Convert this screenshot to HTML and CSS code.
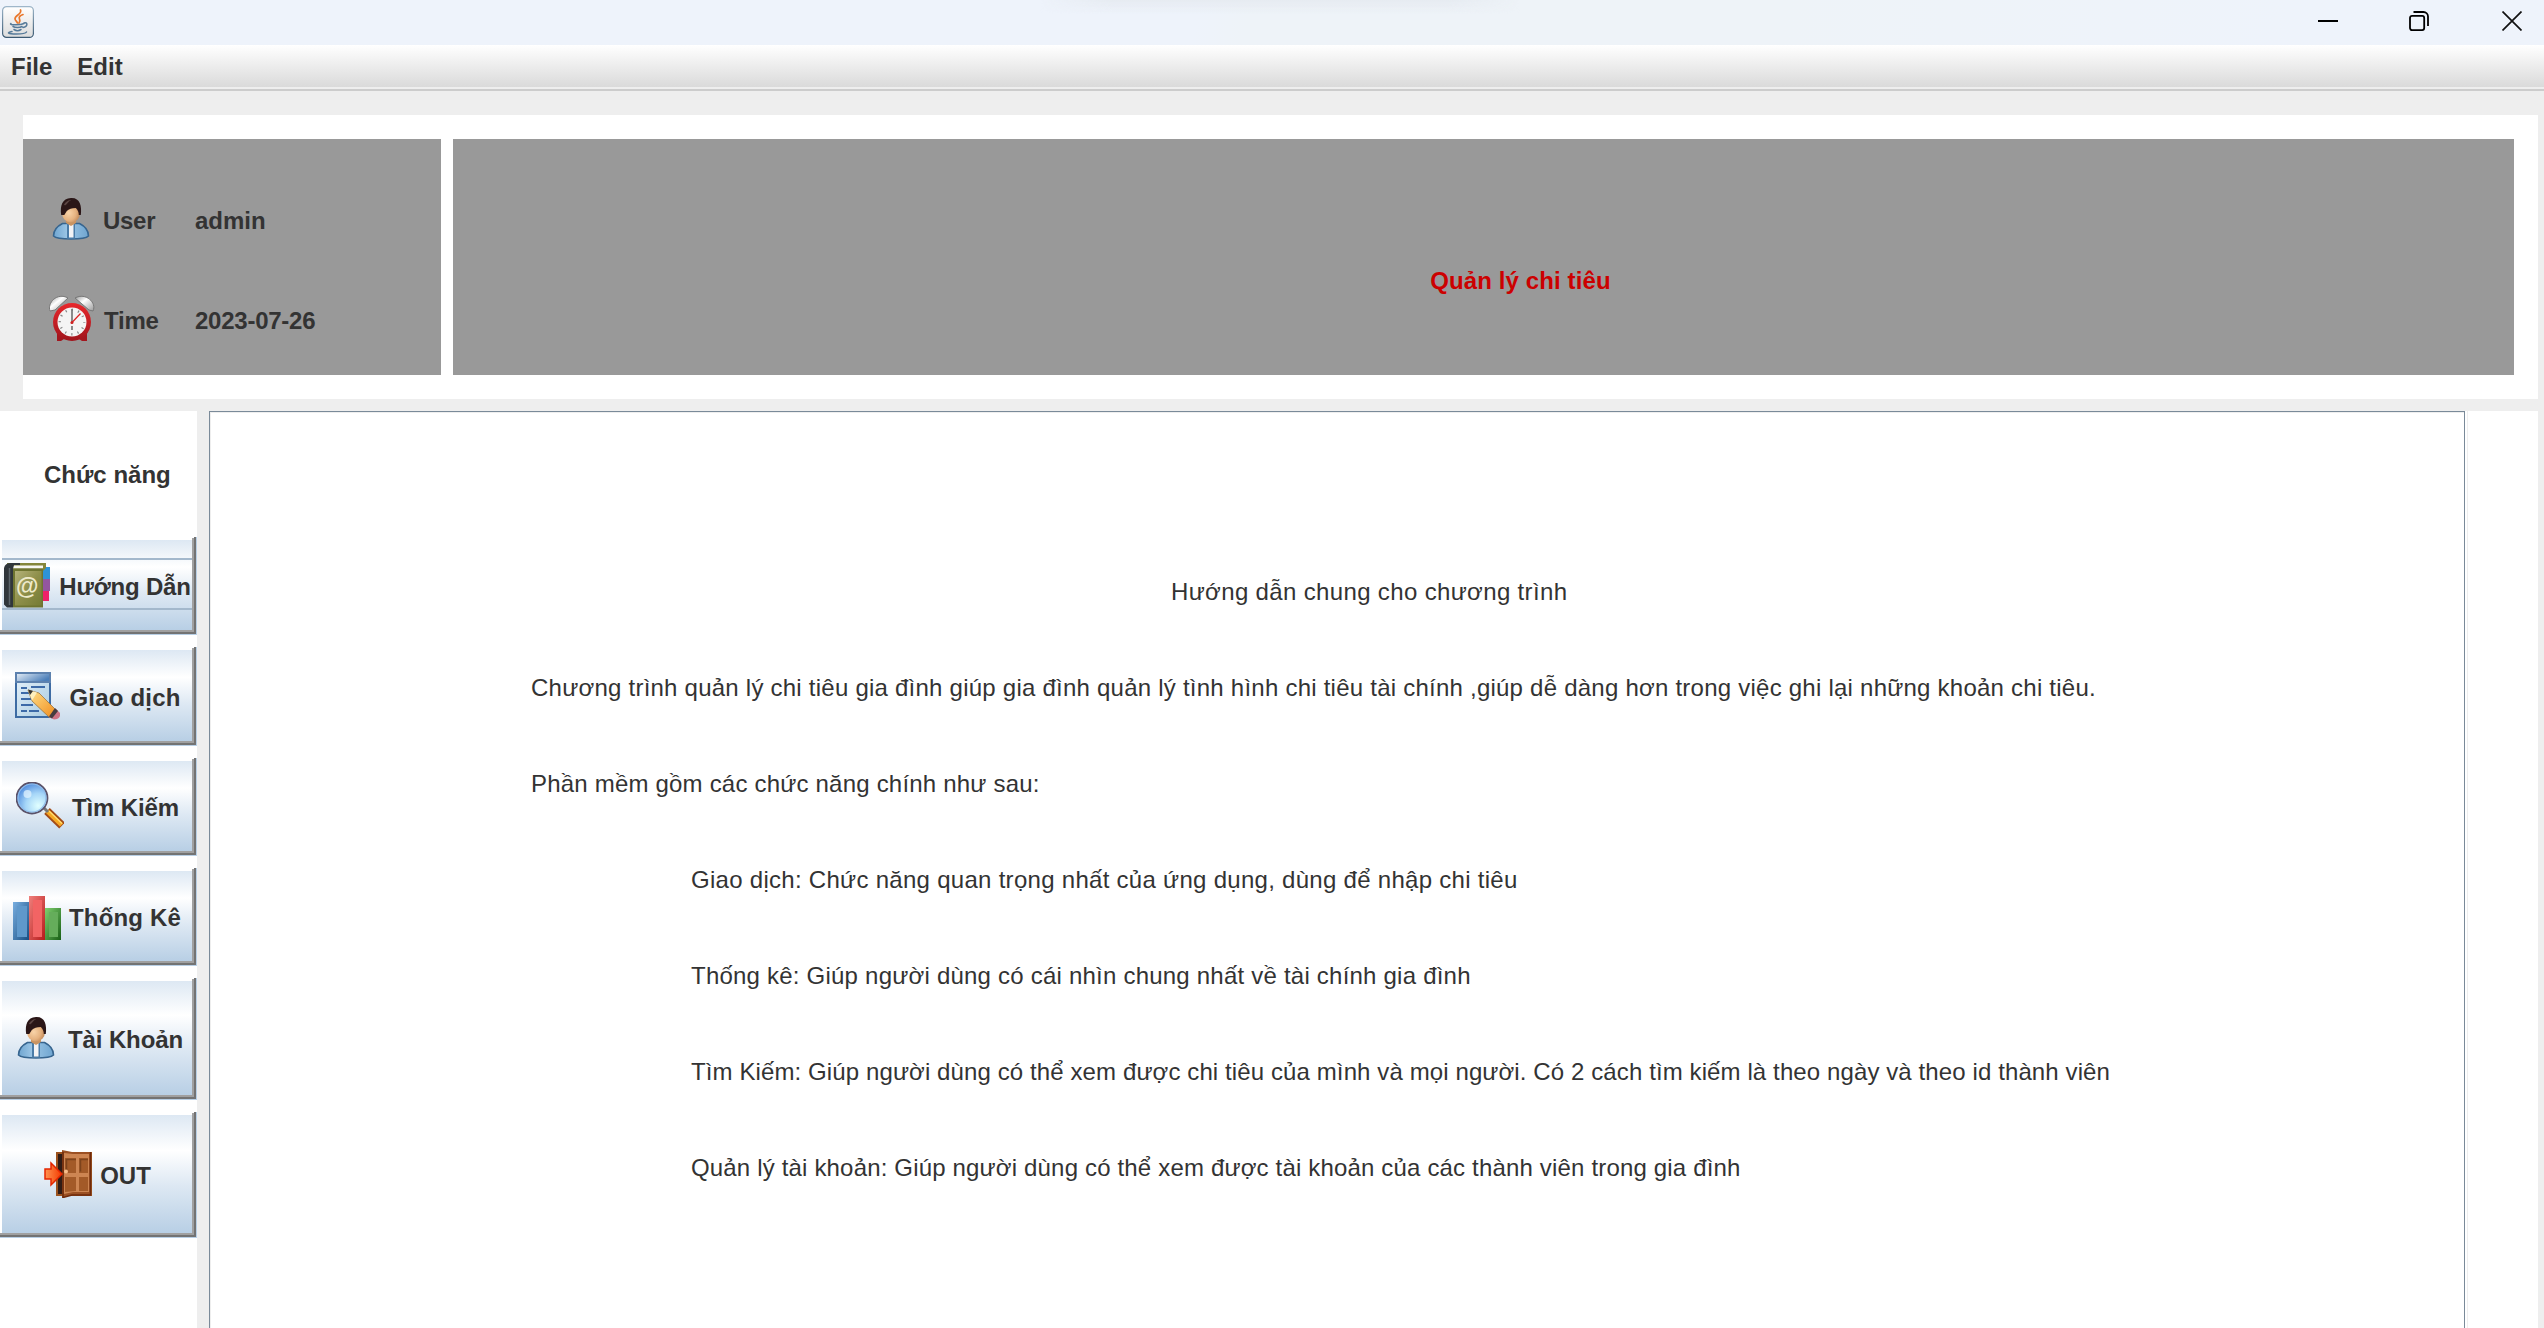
FILE: index.html
```html
<!DOCTYPE html>
<html lang="vi">
<head>
<meta charset="utf-8">
<title>Quản lý chi tiêu</title>
<link rel="stylesheet" href="styles.css">
</head>
<body>
<svg width="0" height="0" class="defs" aria-hidden="true">
  <defs>
    <linearGradient id="shirt" x1="0" x2="1"><stop offset="0" stop-color="#6fa5d0"/><stop offset=".4" stop-color="#9cc6e6"/><stop offset="1" stop-color="#6fa5d0"/></linearGradient>
    <radialGradient id="skin" cx=".38" cy=".5" r=".65"><stop offset="0" stop-color="#f8d3a8"/><stop offset=".6" stop-color="#e5b280"/><stop offset="1" stop-color="#bd8555"/></radialGradient>
    <symbol id="person" viewBox="0 0 48 48">
      <path d="M6.500 41c0-5 3-9.500 9-12.500h17c6 3 9 7.500 9 12.500-2 2-9 3-17.500 3S8.500 43 6.500 41z" fill="url(#shirt)" stroke="#37658f" stroke-width="1.600"/>
      <path d="M20 28h8v15.500h-8z" fill="#4a7ca8"/>
      <path d="M22 28h4.500v14.500H22z" fill="#f3f3f5"/>
      <path d="M19 24h10v4l-5 3-5-3z" fill="#c99462"/>
      <ellipse cx="24" cy="18" rx="9" ry="9.500" fill="url(#skin)"/>
      <path d="M14.200 20C13 11 15 3.500 24 3S35 11 33.800 20l-2 0c0-3-1-5-3-7-4 0-7 1-9 3l-2.500 4z" fill="#2a1617"/>
      <path d="M17 9.500c2-3 5-5 7-4-2 0-3 3-6 5z" fill="#5b4543"/>
    </symbol>
  </defs>
</svg>

<div class="window">
  <header class="titlebar">
    <svg class="java" viewBox="0 0 32 32">
      <defs><linearGradient id="jb" x2="0" y2="1"><stop offset="0" stop-color="#fff"/><stop offset="1" stop-color="#dcdcdc"/></linearGradient>
      <linearGradient id="js" x2="0" y2="1"><stop offset="0" stop-color="#9eb6c9"/><stop offset="1" stop-color="#3c5a73"/></linearGradient></defs>
      <rect x=".6" y=".6" width="30.800" height="30.800" rx="4" fill="url(#jb)" stroke="url(#js)" stroke-width="1.200"/>
      <g fill="none" stroke="#e9772b" stroke-width="1.700" stroke-linecap="round"><path d="M18.500 4c2 4-6 5.500-5.500 9 .2 1.500 2 2.500 2.500 4"/><path d="M21 8.500c-3 1-4.500 2.500-3.500 4.500.8 1.500.5 2.500-.5 4"/></g>
      <g fill="none" stroke="#557a99" stroke-width="1.500" stroke-linecap="round"><path d="M9 17.500c-3 1.500 9 2 13 0M22 17c4-1.500 4 4-1 4.500M11 20.500c2 1.300 7 1.300 9 0M12 23.500c2 1.300 5 1.300 7 0M10 25.500c-6 1-4 2.500 4 2.500 7 0 10-1 10.500-2"/></g>
    </svg>
    <div class="glow"></div>
    <div class="controls">
      <svg viewBox="0 0 20 20"><path d="M0 10h20" stroke="#000" stroke-width="2"/></svg>
      <svg viewBox="0 0 20 20" fill="none" stroke="#000" stroke-width="1.800"><rect x="1" y="4.900" width="14.200" height="14.200" rx="2"/><path d="M4.500 1H14.500a4.500 4.500 0 0 1 4.500 4.500V15"/></svg>
      <svg viewBox="0 0 20 20"><path d="M.5.500l19 19M19.500.500l-19 19" stroke="#111" stroke-width="1.700"/></svg>
    </div>
  </header>
  <nav class="menubar"><span>File</span><span>Edit</span></nav>

  <section class="banner">
    <div class="session">
      <div class="row"><svg class="icon"><use href="#person"/></svg><b>User</b><span>admin</span></div>
      <div class="row time">
        <svg class="icon" viewBox="0 0 48 48">
          <defs><linearGradient id="bell" x2="1" y2="1"><stop offset="0" stop-color="#999"/><stop offset=".4" stop-color="#fff"/><stop offset="1" stop-color="#999"/></linearGradient>
          <linearGradient id="red" x2="0" y2="1"><stop offset="0" stop-color="#e8282c"/><stop offset="1" stop-color="#a0141c"/></linearGradient></defs>
          <path d="M2 17C-1 9 9-2 20 4L7 16z" fill="url(#bell)" stroke="#777"/>
          <path d="M45 17C49 9 38-2 27 4l14 12z" fill="url(#bell)" stroke="#777"/>
          <path d="M9 39h30v8h-5l-3-2H16l-3 2H9z" fill="#a3161e"/>
          <circle cx="24" cy="28" r="19" fill="url(#red)"/>
          <circle cx="24" cy="28" r="14.500" fill="#f4f4f4"/>
          <circle cx="24" cy="28" r="12.200" fill="none" stroke="#888" stroke-width="2.400" stroke-dasharray="1.200 5.188" stroke-dashoffset=".6"/>
          <path d="M24 15v13M24 32v4" stroke="#777" stroke-width="1.700"/>
          <path d="M23 29.500l9.500-10" stroke="#d22" stroke-width="1.200"/>
          <circle cx="24" cy="28.500" r="1.500" fill="#c22"/>
        </svg><b>Time</b><span>2023-07-26</span></div>
    </div>
    <div class="heading"><h1>Quản lý chi tiêu</h1></div>
  </section>

  <div class="body">
    <aside class="sidebar">
      <h2>Chức năng</h2>
      <button class="guide-button">
        <svg class="icon" viewBox="0 0 48 48">
          <defs><linearGradient id="cov" x2="1" y2="1"><stop offset="0" stop-color="#b4b27a"/><stop offset=".5" stop-color="#8e8f4a"/><stop offset="1" stop-color="#757b35"/></linearGradient></defs>
          <rect x="38" y="6" width="9" height="12" fill="#2d93d8"/><rect x="38" y="18" width="9" height="12" fill="#93569f"/><rect x="38" y="30" width="8" height="10" fill="#ef2268"/>
          <path d="M4 2h39v5l-3 3H4z" fill="#84863a"/><path d="M8 4.500h32v3H8z" fill="#f7f7f2"/>
          <path d="M1 7q1-5 7-5h9v2H11L10 8v38.500H4l-3-3z" fill="#30363b"/><path d="M6.500 7v37" stroke="#5c656b" stroke-width="1.500"/>
          <rect x="10" y="7.500" width="30" height="39" fill="#6e7430"/><rect x="12" y="10" width="26.500" height="34.500" fill="url(#cov)"/>
          <text x="24" y="33" text-anchor="middle" font-size="23" fill="#eeeacb">@</text>
        </svg><span>Hướng Dẫn</span></button>
      <button class="deal">
        <svg class="icon" viewBox="0 0 48 48">
          <defs><linearGradient id="win" x2="1" y2="1"><stop offset="0" stop-color="#e6f2fb"/><stop offset="1" stop-color="#a9cbe0"/></linearGradient>
          <linearGradient id="bar" x2="1" y2=".5"><stop offset="0" stop-color="#e8f0f8"/><stop offset="1" stop-color="#4c7fb9"/></linearGradient>
          <linearGradient id="pen" x2="1" y2="1"><stop offset="0" stop-color="#ffe48f"/><stop offset="1" stop-color="#f08a1a"/></linearGradient></defs>
          <rect x="3" y="1" width="34" height="44" fill="url(#win)" stroke="#3d6ba3" stroke-width="2"/>
          <rect x="3" y="1" width="34" height="9" fill="url(#bar)" stroke="#5c81ae" stroke-width="2"/>
          <path d="M8 16h6M18 15h14M8 21h8M8 27h10M8 33h12M8 39h6M16 39h10" stroke="#3c6aa8" stroke-width="2"/>
          <path d="M15 18l11 3 17 17-6 8-18-17z" fill="url(#pen)" stroke="#9a7540" stroke-width=".8"/>
          <path d="M15 18l9 2.500-5 8z" fill="#fff0bd"/><path d="M15 17.500l5 1.500-3 4z" fill="#333"/>
          <path d="M43 37l4 4q1 6-6 6.500L36 45z" fill="#cf7486"/><path d="M42 36l3 3-6 7.500-3-2z" fill="#463d40"/>
        </svg><span>Giao dịch</span></button>
      <button class="search">
        <svg class="icon" viewBox="0 0 48 48">
          <defs><radialGradient id="lens" cx=".7" cy=".75" r=".8"><stop offset="0" stop-color="#e0ffff"/><stop offset=".5" stop-color="#a6d6f8"/><stop offset="1" stop-color="#4b87dc"/></radialGradient></defs>
          <path d="M31 29l15 14.500" stroke="#a24b17" stroke-width="8"/><path d="M31 29l14.500 14" stroke="#f6a823" stroke-width="4.500"/><path d="M33 29l13 12.500" stroke="#ffdc74" stroke-width="1.300"/>
          <path d="M28 26l4 4" stroke="#777" stroke-width="3"/>
          <circle cx="16" cy="16" r="15.500" fill="url(#lens)" stroke="#5b5269" stroke-width="1.800"/><circle cx="16" cy="16" r="14" fill="none" stroke="#91bde9" stroke-width="1.200"/>
          <circle cx="11.500" cy="12" r="4" fill="#e2f3ff" opacity=".75"/>
        </svg><span>Tìm Kiếm</span></button>
      <button class="stats">
        <svg class="icon" viewBox="0 0 48 48">
          <defs><linearGradient id="b1" x2="1" y2="1"><stop offset="0" stop-color="#78aee0"/><stop offset="1" stop-color="#174d82"/></linearGradient>
          <linearGradient id="b2" x2="1" y2="1"><stop offset="0" stop-color="#f0807c"/><stop offset="1" stop-color="#b61a1b"/></linearGradient>
          <linearGradient id="b3" x2="1" y2="1"><stop offset="0" stop-color="#80d070"/><stop offset="1" stop-color="#186015"/></linearGradient></defs>
          <path d="M0 10h16v38H0z" fill="url(#b1)"/><path d="M4 14h10v31H4z" fill="#5f98cb"/>
          <path d="M16 4h16v44H16z" fill="url(#b2)"/><path d="M20 8h9v37h-9z" fill="#f26464"/>
          <path d="M32 16h16v32H32z" fill="url(#b3)"/><path d="M36 20h9v25h-9z" fill="#65ad5b"/>
        </svg><span>Thống Kê</span></button>
      <button class="account"><svg class="icon"><use href="#person"/></svg><span>Tài Khoản</span></button>
      <button class="out">
        <svg class="icon" viewBox="0 0 48 48">
          <defs><linearGradient id="arr" x2="1"><stop offset="0" stop-color="#ff9350"/><stop offset="1" stop-color="#f23a00"/></linearGradient></defs>
          <rect x="13" y="3" width="34" height="42" fill="#301c16" stroke="#9c531e" stroke-width="2"/>
          <path d="M18 0l10 2h19v43H28l-10 3z" fill="#9b5023"/><path d="M20 3l9 1h16v38H29l-9 2z" fill="#cd8552"/>
          <path d="M21 8h11v15H21zM35 8h9v15h-9zM21 27h11v14l-11 1zM35 27h9v14h-9z" fill="#a35a28"/>
          <path d="M22.500 21.500V9.500H32M36.500 21.500V9.500H44" fill="none" stroke="#7d431c" stroke-width="1.500"/>
          <path d="M46.500 2v43H28l-9 2.500V2" fill="none" stroke="#6e2a0c" stroke-width="1.500"/>
          <path d="M1 19h6v-6l11 11L7 35v-6H1z" fill="url(#arr)" stroke="#e52600" stroke-width="1.500"/>
          <circle cx="22" cy="21.500" r="2" fill="#f6bd8a"/>
        </svg><span>OUT</span></button>
    </aside>
    <main class="guide">
      <p class="lead">Hướng dẫn chung cho chương trình</p>
      <p class="intro">Chương trình quản lý chi tiêu gia đình giúp gia đình quản lý tình hình chi tiêu tài chính ,giúp dễ dàng hơn trong việc ghi lại những khoản chi tiêu.</p>
      <p class="features">Phần mềm gồm các chức năng chính như sau:</p>
      <p class="item wide">Giao dịch: Chức năng quan trọng nhất của ứng dụng, dùng để nhập chi tiêu</p>
      <p class="item">Thống kê: Giúp người dùng có cái nhìn chung nhất về tài chính gia đình</p>
      <p class="item narrow">Tìm Kiếm: Giúp người dùng có thể xem được chi tiêu của mình và mọi người. Có 2 cách tìm kiếm là theo ngày và theo id thành viên</p>
      <p class="item medium">Quản lý tài khoản: Giúp người dùng có thể xem được tài khoản của các thành viên trong gia đình</p>
    </main>
    <div class="gutter"></div>
  </div>
</div>
</body>
</html>
```

FILE: styles.css
```css
* { box-sizing: border-box; margin: 0; }
body { background: #eee; color: #333; font: 24px/28px "Liberation Sans", Arial, sans-serif; }
.defs { position: absolute; }
.window { display: flex; flex-direction: column; height: 1328px; overflow: hidden; }

.titlebar { display: flex; height: 45px; background: linear-gradient(100deg, #eef3fb 0 47%, #eef3f8 49% 70%, #eef3fb 90%); }
.java { width: 32px; height: 32px; margin: 6px 0 0 2px; }
.glow { width: 480px; height: 14px; margin-left: 1006px; background: linear-gradient(#e6ebf1, #e6ebf100); mask-image: linear-gradient(90deg, transparent, #000 15% 85%, transparent); }
.controls { display: flex; margin: 11px 22px 0 auto; }
.controls svg { width: 20px; height: 20px; display: block; margin-left: 71px; }
.controls svg:last-child { margin-left: 73px; }
.menubar { display: flex; gap: 25px; height: 46px; padding: 8px 11px 0; font-weight: bold; border-bottom: 2px solid #ccc; background: linear-gradient(#fff, #dadada) 0 0 / 100% 42px no-repeat, #eee; }

.banner { display: flex; gap: 12px; margin: 24px 6px 12px 23px; padding: 24px 24px 24px 0; height: 284px; background: #fff; }
.session { width: 418px; background: #999; padding: 56px 0 0 24px; font-weight: bold; }
.row { display: grid; grid-template-columns: 48px 84px auto; column-gap: 8px; align-items: center; height: 48px; }
.row + .row { margin-top: 51px; }
.row b, .row span { padding-top: 3px; }
.row b { letter-spacing: -.3px; }
.row.time { grid-template-columns: 48px 83px auto; padding-left: 1px; }
.row.time b, .row.time span { padding-top: 5px; letter-spacing: -.25px; }
.icon { width: 48px; height: 48px; flex: none; display: block; }
.heading { flex: 1; background: #999; text-align: center; padding: 128px 0 0 74px; }
h1, h2 { font-size: 24px; line-height: 28px; }
h1 { color: #c00; letter-spacing: .1px; }

.body { display: flex; flex: 1; min-height: 0; padding-right: 6px; }
.sidebar { display: flex; flex-direction: column; gap: 12px; width: 197px; background: #fff; }
.sidebar h2 { height: 114px; padding: 50px 0 0 44px; }
button { display: flex; align-items: center; justify-content: center; gap: 8px; height: 98px; flex: none; padding: 3px 5px 5px 2px; white-space: nowrap; border: 0; color: #333; font: bold 24px/28px "Liberation Sans", Arial, sans-serif;
  background:
    linear-gradient(#b8cfe5, #b8cfe5) 100% 0 / 1px 100% no-repeat,
    linear-gradient(#b8cfe5, #b8cfe5) 0 100% / 100% 1px no-repeat,
    linear-gradient(#737373, #737373) 194px 0 / 2px calc(100% - 1px) no-repeat,
    linear-gradient(#737373, #737373) 0 calc(100% - 1px) / 196px 2px no-repeat,
    linear-gradient(#a0a0a0, #a0a0a0) 192px 1px / 2px calc(100% - 4px) no-repeat,
    linear-gradient(#a0a0a0, #a0a0a0) 0 calc(100% - 3px) / 194px 2px no-repeat,
    linear-gradient(#dde8f3, #fff 30%, #dde8f3 60%, #b8cfe5) content-box no-repeat,
    #fff; }
button span { padding-top: 3px; }
.deal { height: 99px; letter-spacing: .2px; }
.deal .icon, .deal span { margin-top: 1px; }
.search { letter-spacing: -.1px; }
.stats { letter-spacing: .15px; }
.account { height: 122px; padding-right: 5px; letter-spacing: -.1px; }
.out { height: 126px; }
.out .icon, .account .icon, .search .icon { margin-left: 1px; }
.guide-button { letter-spacing: -.2px;
  background:
    linear-gradient(#b8cfe5, #b8cfe5) 100% 0 / 1px 100% no-repeat,
    linear-gradient(#b8cfe5, #b8cfe5) 0 100% / 100% 1px no-repeat,
    linear-gradient(#737373, #737373) 194px 0 / 2px calc(100% - 1px) no-repeat,
    linear-gradient(#737373, #737373) 0 calc(100% - 1px) / 196px 2px no-repeat,
    linear-gradient(#a0a0a0, #a0a0a0) 192px 1px / 2px calc(100% - 4px) no-repeat,
    linear-gradient(#a0a0a0, #a0a0a0) 0 calc(100% - 3px) / 194px 2px no-repeat,
    linear-gradient(#a3b8cc, #a3b8cc) 2px 21px / 190px 2px no-repeat,
    linear-gradient(#a3b8cc, #a3b8cc) 2px 71px / 190px 2px no-repeat,
    linear-gradient(#dde8f3, #fff 30%, #dde8f3 60%, #b8cfe5) content-box no-repeat,
    #fff; }

.guide { display: flex; flex-direction: column; gap: 68px; width: 2256px; margin-left: 12px; padding: 166px 0 0 321px; border: 1px solid #7a8a99; border-bottom: 0; background: #fff; box-shadow: inset 1px 1px #eee, 2px 0 #fff; white-space: nowrap; letter-spacing: .2px; }
.guide .lead { padding-left: 640px; letter-spacing: .35px; }
.guide .intro { letter-spacing: .236px; }
.guide .item { padding-left: 160px; letter-spacing: .22px; }
.guide .item.wide { letter-spacing: .285px; }
.guide .item.medium { letter-spacing: .17px; }
.guide .item.narrow { letter-spacing: .107px; }
.gutter { flex: 1; margin-left: 3px; background: #fff; }
```
